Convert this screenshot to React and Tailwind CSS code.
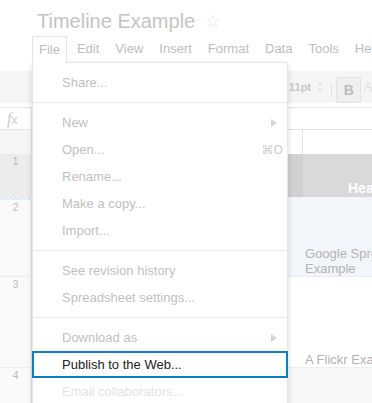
import React from 'react';

const menuGroups = [
  [{ label: 'Share...' }],
  [
    { label: 'New', arrow: true },
    { label: 'Open...', shortcut: '⌘O' },
    { label: 'Rename...' },
    { label: 'Make a copy...' },
    { label: 'Import...' },
  ],
  [{ label: 'See revision history' }, { label: 'Spreadsheet settings...' }],
  [
    { label: 'Download as', arrow: true },
    { label: 'Publish to the Web...', selected: true },
    { label: 'Email collaborators...', faint: true },
  ],
];

const menus = ['Edit', 'View', 'Insert', 'Format', 'Data', 'Tools', 'Help'];

function MenuItem({ item }) {
  const color = item.selected ? 'text-[#222222]' : item.faint ? 'text-[#e4e4e4]' : 'text-[#bfbfbf]';
  return (
    <div
      className={`-mx-px h-[27px] border-2 pl-[28px] flex items-center text-[13px] whitespace-nowrap ${color} ${
        item.selected ? 'border-[#0b7dc4]' : 'border-transparent'
      }`}
    >
      <span>{item.label}</span>
      {item.arrow && (
        <svg className="ml-auto mr-[9px]" width="6" height="8" viewBox="0 0 6 8">
          <path d="M0 0 L6 4 L0 8 Z" fill="#d4d4d4" />
        </svg>
      )}
      {item.shortcut && (
        <span className="ml-auto mr-[3px] text-[#cccccc] font-['DejaVu_Sans',sans-serif] text-[12px]">
          {item.shortcut}
        </span>
      )}
    </div>
  );
}

function FileMenu() {
  return (
    <div className="absolute left-[32px] top-[62px] z-10 w-[256px] h-[360px] bg-white border border-[#e6e6e6] shadow-[0_2px_6px_rgba(0,0,0,0.15)] pt-[6px]">
      {menuGroups.map((group, gi) => (
        <div key={gi}>
          {gi > 0 && <div className="h-px bg-[#ebebeb] my-[6px]" />}
          {group.map(item => (
            <MenuItem key={item.label} item={item} />
          ))}
        </div>
      ))}
    </div>
  );
}

function RowHeader({ n, className = '' }) {
  return (
    <div className={`w-[32px] shrink-0 border-r border-[#e3e3e3] text-center text-[11px] leading-[15px] text-[#bdbdbd] ${className}`}>
      {n}
    </div>
  );
}

export default function App() {
  return (
    <div className="relative w-[372px] h-[403px] overflow-hidden bg-white font-['Liberation_Sans',Arial,sans-serif]">
      {/* title */}
      <div className="h-[36px] pl-[37px] pt-[9px] flex items-start whitespace-nowrap">
        <span className="text-[20px] leading-[24px] text-[#c4c4c4]">Timeline Example</span>
        <span className="ml-[10px] text-[17px] leading-[24px] text-[#e2e2e2] font-['DejaVu_Sans',sans-serif]">☆</span>
      </div>

      {/* menu bar */}
      <div className="flex items-start h-[26px] pl-[32px] text-[13px] text-[#bdbdbd] whitespace-nowrap">
        <div className="relative z-20 h-[27px] px-[6px] border border-b-0 border-[#e3e3e3] bg-white leading-[25px]">File</div>
        <div className="flex ml-[2px]">
          {menus.map(m => (
            <div key={m} className="px-2 leading-[26px]">{m}</div>
          ))}
        </div>
      </div>

      <div className="h-[9px]" />

      {/* toolbar */}
      <div className="h-[32px] bg-[#f5f5f5] flex items-start whitespace-nowrap">
        <div className="w-[289px] shrink-0" />
        <span className="mt-[10px] text-[11px] leading-[13px] font-bold text-[#c8c8c8]">11pt</span>
        <svg className="ml-[7px] mt-[11px]" width="5" height="10" viewBox="0 0 5 10">
          <path d="M0.5 3.5 L2.5 1 L4.5 3.5 M0.5 6.5 L2.5 9 L4.5 6.5" fill="none" stroke="#d0d0d0" strokeWidth="1" />
        </svg>
        <div className="ml-[8px] mt-[12px] w-px h-[14px] bg-[#e0e0e0]" />
        <div className="ml-[5px] mt-[6px] w-[27px] h-[26px] rounded-[2px] border border-[#e2e2e2] bg-[#efefef] flex items-center justify-center text-[14px] font-bold text-[#bdbdbd]">
          B
        </div>
        <span className="ml-[3px] mt-[10px] text-[12px] leading-[13px] text-[#e0e0e0]">A</span>
      </div>

      <div className="h-[4px]" />

      {/* formula bar */}
      <div className="h-[23px] border-y border-[#e5e5e5] flex">
        <div className="w-[32px] border-r border-[#e5e5e5] flex items-center pl-[7px] text-[#cccccc]">
          <span className="italic font-['Liberation_Serif',serif] text-[16px] leading-[16px]">f</span>
          <span className="text-[12px] leading-[16px] mt-[2px]">x</span>
        </div>
      </div>

      {/* column headers */}
      <div className="h-[24px] flex">
        <div className="w-[32px] shrink-0 border-r border-[#e3e3e3] bg-[#f6f6f6]" />
        <div className="w-[271px] shrink-0 border-r border-[#e3e3e3]" />
        <div className="flex-1" />
      </div>

      {/* row 1 */}
      <div className="h-[43px] flex">
        <RowHeader n="1" className="bg-[#ececec]" />
        <div className="w-[271px] shrink-0 bg-[#d1d1d1]" />
        <div className="flex-1 bg-[#d9d9d9] flex items-end pl-[45px] pb-px whitespace-nowrap">
          <span className="text-[14px] leading-[16px] font-bold text-white">Header</span>
        </div>
      </div>

      {/* freeze bar */}
      <div className="h-[3px] flex">
        <div className="w-[32px] shrink-0 bg-[repeating-linear-gradient(45deg,#d3e0f3_0px,#d3e0f3_1px,#eef3fa_1px,#eef3fa_3px)]" />
        <div className="flex-1 bg-[#f2f5fa]" />
      </div>

      {/* row 2 */}
      <div className="h-[77px] flex border-b border-[#eeeeee]">
        <RowHeader n="2" className="bg-[#fafafa]" />
        <div className="flex-1 bg-[#f2f5fa] flex flex-col justify-end pl-[2px] text-[13px] leading-[15px] text-[#b3b3b3] whitespace-nowrap">
          <span className="pl-[271px]">Google Spreadsheet</span>
          <span className="pl-[271px]">Example</span>
        </div>
      </div>

      {/* row 3 */}
      <div className="h-[91px] flex border-b border-[#eeeeee]">
        <RowHeader n="3" className="bg-[#fafafa]" />
        <div className="flex-1 flex items-end pl-[273px] text-[13px] leading-[15px] text-[#b3b3b3] whitespace-nowrap">
          <span>A Flickr Example</span>
        </div>
      </div>

      {/* row 4 */}
      <div className="h-[40px] flex">
        <RowHeader n="4" className="bg-[#fafafa]" />
        <div className="flex-1 bg-[#f8f8f8]" />
      </div>

      <FileMenu />
    </div>
  );
}
